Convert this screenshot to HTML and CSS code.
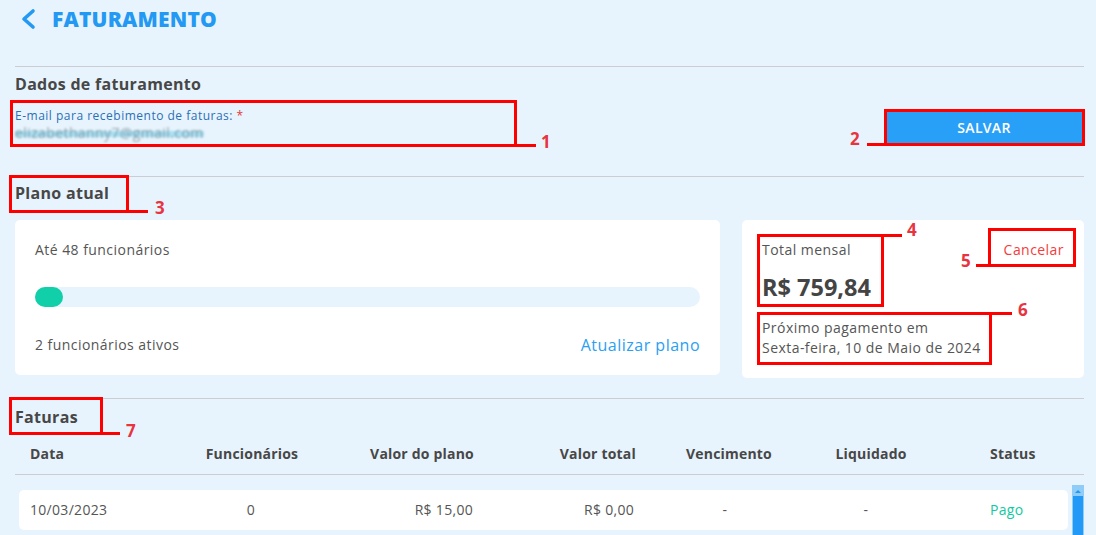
FILE: index.html
```html
<!DOCTYPE html>
<html lang="pt-BR">

<head>
    <meta charset="UTF-8">
    <meta name="viewport" content="width=device-width, initial-scale=1.0">
    <title>Faturamento</title>
    <link rel="stylesheet" href="styles.css">
</head>

<body>
    <div class="page">

        <header class="topbar">
            <a class="back" href="#">
                <svg width="16" height="22" viewBox="0 0 16 22">
                    <path d="M13 3 L4 11 L13 19" fill="none" stroke="#2399f3" stroke-width="3.6" stroke-linecap="round" stroke-linejoin="round" />
                </svg>
            </a>
            <h1>FATURAMENTO</h1>
        </header>

        <section class="block billing">
            <h2>Dados de faturamento</h2>
            <div class="billing-row">
                <div class="email-field">
                    <label for="email">E-mail para recebimento de faturas: <span class="req">*</span></label>
                    <div class="email-value" id="email"><span>elizabethanny7@gmail.com</span></div>
                </div>
                <button type="button" class="btn-save">SALVAR</button>
            </div>
        </section>

        <section class="block plan">
            <h2>Plano atual</h2>
            <div class="plan-cards">
                <div class="card usage">
                    <p>Até 48 funcionários</p>
                    <div class="bar"><div class="bar-fill" style="width: 28px"></div></div>
                    <div class="usage-foot">
                        <span>2 funcionários ativos</span>
                        <a href="#" class="link-blue">Atualizar plano</a>
                    </div>
                </div>
                <div class="card total">
                    <div class="total-head">
                        <span>Total mensal</span>
                        <a href="#" class="link-red">Cancelar</a>
                    </div>
                    <div class="amount">R$ 759,84</div>
                    <p class="next-pay">Próximo pagamento em<br>Sexta-feira, 10 de Maio de 2024</p>
                </div>
            </div>
        </section>

        <section class="block invoices">
            <h2>Faturas</h2>
            <div class="inv-grid inv-head">
                <span class="c-left">Data</span>
                <span class="c-center">Funcionários</span>
                <span class="c-right">Valor do plano</span>
                <span class="c-right">Valor total</span>
                <span class="c-center">Vencimento</span>
                <span class="c-center">Liquidado</span>
                <span class="c-status">Status</span>
            </div>
            <div class="inv-body">
                <div class="inv-rows">
                    <div class="inv-grid inv-row">
                        <span class="c-left">10/03/2023</span>
                        <span class="c-center">0</span>
                        <span class="c-right">R$ 15,00</span>
                        <span class="c-right">R$ 0,00</span>
                        <span class="c-center">-</span>
                        <span class="c-center">-</span>
                        <span class="c-status paid">Pago</span>
                    </div>
                </div>
                <div class="scrollbar">
                    <span class="scroll-arrow"></span>
                    <span class="scroll-thumb"></span>
                </div>
            </div>
        </section>

        <!-- marcações da captura -->
        <div class="mark m1"></div><div class="tick t1"></div><span class="num n1">1</span>
        <div class="mark m2"></div><div class="tick t2"></div><span class="num n2">2</span>
        <div class="mark m3"></div><div class="tick t3"></div><span class="num n3">3</span>
        <div class="mark m4"></div><div class="tick t4"></div><span class="num n4">4</span>
        <div class="mark m5"></div><div class="tick t5"></div><span class="num n5">5</span>
        <div class="mark m6"></div><div class="tick t6"></div><span class="num n6">6</span>
        <div class="mark m7"></div><div class="tick t7"></div><span class="num n7">7</span>

    </div>
</body>

</html>
```

FILE: styles.css
```css
html,
body {
    margin: 0;
    padding: 0;
    overflow: hidden;
}

body {
    font-family: 'Open Sans', 'Noto Sans', sans-serif;
    background-color: #e8f4fd;
    color: #555;
}

.page {
    position: relative;
    width: 1096px;
    height: 535px;
    box-sizing: border-box;
    padding: 0 12px 0 15px;
}

p {
    margin: 0;
}

a {
    text-decoration: none;
}

/* topo */

.topbar {
    display: flex;
    align-items: center;
    height: 37px;
    padding-left: 5px;
    gap: 16px;
}

.back {
    display: flex;
}

.topbar h1 {
    margin: 0;
    font-size: 21px;
    font-weight: 800;
    color: #2399f3;
    letter-spacing: 0.2px;
}

/* blocos */

.block {
    border-top: 1px solid #cbcdd0;
}

.block h2 {
    margin: 0;
    font-size: 16px;
    line-height: 20px;
    font-weight: 700;
    color: #474747;
    letter-spacing: 0.3px;
}

.billing {
    margin-top: 29px;
    padding: 7px 0 31px;
}

.billing-row {
    display: flex;
    justify-content: space-between;
    align-items: flex-start;
    margin-top: 14px;
}

.email-field label {
    display: block;
    font-size: 12px;
    line-height: 16px;
    color: #2a6fb7;
    letter-spacing: 0.5px;
}

.email-field .req {
    color: #e53935;
}

.email-value {
    font-size: 14px;
    line-height: 18px;
    height: 18px;
    letter-spacing: 0.4px;
}

.email-value span {
    color: rgba(100, 110, 120, 0.6);
    filter: blur(0.8px);
    background: linear-gradient(transparent 40%, #a8e0f4 40%, #a8e0f4 75%, transparent 75%);
}

.btn-save {
    margin-top: 2px;
    width: 200px;
    height: 35px;
    border: none;
    background-color: #28a0f7;
    color: white;
    font-family: inherit;
    font-size: 14px;
    font-weight: 600;
    letter-spacing: 0.3px;
    cursor: pointer;
}

/* plano */

.plan {
    padding: 6px 0 20px;
}

.plan-cards {
    display: flex;
    align-items: flex-start;
    gap: 22px;
    margin-top: 17px;
}

.card {
    background-color: white;
    border-radius: 5px;
    box-sizing: border-box;
    padding: 20px;
    font-size: 14px;
    line-height: 20px;
    letter-spacing: 0.45px;
}

.usage {
    width: 705px;
}

.bar {
    margin-top: 27px;
    height: 20px;
    border-radius: 10px;
    background-color: #e8f4fd;
}

.bar-fill {
    height: 20px;
    border-radius: 10px;
    background-color: #10cfa9;
}

.usage-foot {
    display: flex;
    justify-content: space-between;
    margin-top: 28px;
}

.link-blue {
    font-size: 16px;
    color: #2aa0f2;
    letter-spacing: 0.5px;
}

.total {
    flex: 1;
}

.total-head {
    display: flex;
    justify-content: space-between;
}

.link-red {
    color: #f23d3d;
}

.amount {
    margin-top: 12px;
    font-size: 23.5px;
    line-height: 30px;
    font-weight: 700;
    color: #444;
    letter-spacing: 0;
}

.next-pay {
    margin-top: 16px;
}

/* faturas */

.invoices {
    padding-top: 8px;
}

.inv-grid {
    display: grid;
    align-items: center;
    font-size: 14px;
    line-height: 20px;
}

.inv-head {
    grid-template-columns: 180px 114px 165px 162px 186px 98px 1fr;
    margin-top: 17px;
    padding-bottom: 10px;
    border-bottom: 1px solid #cbcdd0;
    font-weight: 700;
    color: #474747;
    letter-spacing: 0.2px;
}

.c-left {
    padding-left: 15px;
}

.c-center {
    text-align: center;
}

.c-right {
    text-align: right;
}

.c-status {
    padding-left: 70px;
}

.inv-body {
    display: flex;
    margin-top: 10px;
    height: 50px;
    overflow: hidden;
}

.inv-rows {
    flex: 1;
    padding: 5px 4px 0;
}

.inv-row {
    grid-template-columns: 174px 116px 164px 161px 182px 100px 1fr;
    height: 40px;
    background-color: white;
    border-radius: 5px;
    color: #555;
    letter-spacing: 0.3px;
}

.inv-row .c-left {
    padding-left: 11px;
}

.inv-row .c-status {
    padding-left: 74px;
}

.paid {
    color: #12c9a0;
}

.scrollbar {
    width: 12px;
    display: flex;
    flex-direction: column;
    align-items: center;
    background-color: #8fcdf8;
}

.scroll-arrow {
    margin-top: 5px;
    width: 0;
    height: 0;
    border-left: 3px solid transparent;
    border-right: 3px solid transparent;
    border-bottom: 3px solid #2196f3;
}

.scroll-thumb {
    margin-top: 3px;
    width: 10px;
    flex: 1;
    background-color: #2299f6;
}

/* marcações vermelhas */

.mark {
    position: absolute;
    border: 3px solid #ff0000;
    box-sizing: border-box;
}

.tick {
    position: absolute;
    height: 3px;
    background-color: #ff0000;
}

.num {
    position: absolute;
    font-size: 17px;
    line-height: 20px;
    font-weight: 700;
    color: #e8343f;
}

.m1 { left: 10px; top: 100px; width: 507px; height: 47px; }
.t1 { left: 514px; top: 144px; width: 22px; }
.n1 { left: 541px; top: 132px; }

.m2 { left: 884px; top: 109px; width: 201px; height: 37px; }
.t2 { left: 867px; top: 143px; width: 18px; }
.n2 { left: 850px; top: 129px; }

.m3 { left: 9px; top: 175px; width: 120px; height: 38px; }
.t3 { left: 126px; top: 210px; width: 22px; }
.n3 { left: 155px; top: 198px; }

.m4 { left: 757px; top: 234px; width: 127px; height: 73px; }
.t4 { left: 881px; top: 234px; width: 21px; }
.n4 { left: 907px; top: 220px; }

.m5 { left: 988px; top: 228px; width: 88px; height: 39px; }
.t5 { left: 976px; top: 264px; width: 13px; }
.n5 { left: 961px; top: 251px; }

.m6 { left: 757px; top: 312px; width: 235px; height: 53px; }
.t6 { left: 989px; top: 312px; width: 23px; }
.n6 { left: 1018px; top: 300px; }

.m7 { left: 9px; top: 397px; width: 94px; height: 38px; }
.t7 { left: 100px; top: 432px; width: 20px; }
.n7 { left: 126px; top: 421px; }
```
